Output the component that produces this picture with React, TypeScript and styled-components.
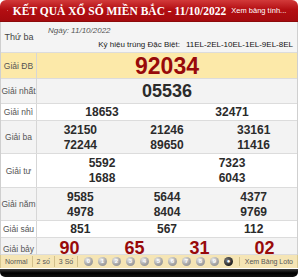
import React from "react";
import styled, { createGlobalStyle } from "styled-components";

const Global = createGlobalStyle`
  html, body {
    margin: 0;
    padding: 0;
    background: #ffffff;
  }
  body {
    font-family: "Liberation Sans", Arial, sans-serif;
  }
`;

const Frame = styled.div`
  width: 298px;
  display: flex;
  flex-direction: column;
`;

const Header = styled.div`
  height: 21px;
  display: flex;
  align-items: center;
  padding: 0 6px 0 7px;
  border-radius: 6px 6px 0 0;
  background: linear-gradient(#d23a3a 0%, #b40f13 45%, #a50a0e 100%);
  border-bottom: 1px solid #8c0a0a;
  gap: 5px;
`;

const Title = styled.div`
  flex: 1;
  color: #ffffff;
  font-family: "Liberation Serif", "Times New Roman", serif;
  font-weight: bold;
  font-size: 11.5px;
  white-space: nowrap;
`;

const MoreLink = styled.div`
  color: #ffffff;
  font-size: 7.5px;
  white-space: nowrap;
`;

const Table = styled.div`
  border-left: 1px solid #cfcfcf;
  border-right: 1px solid #cfcfcf;
  display: flex;
  flex-direction: column;
`;

const Row = styled.div<{ $bg: string; $h: number }>`
  display: grid;
  grid-template-columns: 36px 1fr;
  height: ${(p) => p.$h}px;
  background: ${(p) => p.$bg};
  border-bottom: 1px solid #dcdcdc;
  box-sizing: border-box;
`;

const Label = styled.div`
  display: flex;
  align-items: center;
  justify-content: center;
  border-right: 1px solid #d6d6d6;
  font-size: 8.5px;
  color: #555555;
  white-space: nowrap;
`;

const InfoRow = styled.div`
  display: grid;
  grid-template-columns: 36px 1fr;
  height: 31px;
  background: #f4f4f4;
  border-bottom: 1px solid #dcdcdc;
  box-sizing: border-box;
`;

const InfoLabel = styled.div`
  display: flex;
  align-items: center;
  justify-content: center;
  font-size: 9px;
  color: #444444;
`;

const InfoBody = styled.div`
  display: flex;
  flex-direction: column;
  justify-content: space-between;
  padding: 4px 4px 3px 11px;
`;

const DateLine = styled.div`
  font-style: italic;
  font-size: 8px;
  color: #555555;
`;

const CodeLine = styled.div`
  text-align: right;
  font-size: 8px;
  color: #222222;
  white-space: nowrap;
  span {
    margin-left: 6px;
    color: #111111;
  }
`;

const Values = styled.div<{ $cols: number }>`
  display: grid;
  grid-template-columns: repeat(${(p) => p.$cols}, 1fr);
  align-content: center;
  row-gap: 1px;
`;

const Num = styled.div<{ $size: number; $red?: boolean }>`
  text-align: center;
  font-weight: bold;
  font-size: ${(p) => p.$size}px;
  line-height: ${(p) => Math.round(p.$size * 1.15)}px;
  color: ${(p) => (p.$red ? "#980a0a" : "#2b2b2b")};
`;

const Footer = styled.div`
  height: 13px;
  display: flex;
  align-items: center;
  background: #f5e5b5;
  border-left: 1px solid #d8c890;
  border-right: 1px solid #d8c890;
  font-size: 7px;
  color: #555555;
`;

const Tab = styled.div`
  padding: 0 4px;
  border-right: 1px solid #d2c08a;
  line-height: 11px;
`;

const Balls = styled.div`
  flex: 1;
  display: flex;
  justify-content: center;
  gap: 5px;
  border-right: 1px solid #d2c08a;
`;

const Ball = styled.span<{ $dark?: boolean }>`
  width: 9px;
  height: 9px;
  border-radius: 50%;
  background: ${(p) =>
    p.$dark
      ? "radial-gradient(circle at 35% 35%, #777 0%, #222 70%)"
      : "radial-gradient(circle at 35% 30%, #e8e8e8 0%, #a6a6a6 55%, #8a8a8a 100%)"};
  color: #ffffff;
  font-size: 6px;
  font-weight: bold;
  line-height: 9px;
  text-align: center;
`;

const LotoLink = styled.div`
  padding: 0 4px 0 5px;
`;

const Bottom = styled.div`
  height: 8px;
  margin-top: 1px;
  border-radius: 0 0 5px 5px;
  background: linear-gradient(#3a3a3a, #000000 50%, #111111);
`;

const Chart = () => (
  <svg width="11" height="10" viewBox="0 0 11 10">
    <rect x="0" y="9" width="11" height="1" fill="#2a3b8f" />
    <rect x="1" y="5" width="2" height="4" fill="#f3c400" />
    <rect x="4" y="2" width="2" height="7" fill="#2f5fd0" />
    <rect x="7" y="0" width="2" height="9" fill="#e0262b" />
  </svg>
);

const TicketIcon = () => (
  <svg width="13" height="11" viewBox="0 0 13 11">
    <rect x="0.5" y="2.5" width="12" height="8" rx="1" fill="#f3b6b6" stroke="#ffffff" />
    <rect x="3" y="0" width="7" height="3" fill="#ffffff" />
    <rect x="2" y="5" width="9" height="1" fill="#c22" />
    <rect x="2" y="7" width="9" height="1" fill="#c22" />
  </svg>
);

type Prize = { label: string; h: number; bg: string; cols: number; size: number; red?: boolean; nums: string[] };

const prizes: Prize[] = [
  { label: "Giải ĐB", h: 26, bg: "#fce9a9", cols: 1, size: 23, red: true, nums: ["92034"] },
  { label: "Giải nhất", h: 25, bg: "#f3f3f3", cols: 1, size: 18, nums: ["05536"] },
  { label: "Giải nhì", h: 17, bg: "#ffffff", cols: 2, size: 12, nums: ["18653", "32471"] },
  { label: "Giải ba", h: 33, bg: "#f3f3f3", cols: 3, size: 12, nums: ["32150", "21246", "33161", "72244", "89650", "11416"] },
  { label: "Giải tư", h: 34, bg: "#ffffff", cols: 2, size: 12, nums: ["5592", "7323", "1688", "6043"] },
  { label: "Giải năm", h: 33, bg: "#f3f3f3", cols: 3, size: 12, nums: ["9585", "5644", "4377", "4978", "8404", "9769"] },
  { label: "Giải sáu", h: 17, bg: "#ffffff", cols: 3, size: 12, nums: ["851", "567", "112"] },
  { label: "Giải bảy", h: 17, bg: "#f3f3f3", cols: 4, size: 18, red: true, nums: ["90", "65", "31", "02"] },
];

export default function App() {
  return (
    <>
      <Global />
      <Frame>
        <Header>
          <TicketIcon />
          <Title>KẾT QUẢ XỔ SỐ MIỀN BẮC - 11/10/2022</Title>
          <MoreLink>Xem bảng tính...</MoreLink>
          <Chart />
        </Header>
        <Table>
          <InfoRow>
            <InfoLabel>Thứ ba</InfoLabel>
            <InfoBody>
              <DateLine>Ngày: 11/10/2022</DateLine>
              <CodeLine>
                Ký hiệu trúng Đặc Biệt:<span>11EL-2EL-10EL-1EL-9EL-8EL</span>
              </CodeLine>
            </InfoBody>
          </InfoRow>
          {prizes.map((p) => (
            <Row key={p.label} $bg={p.bg} $h={p.h}>
              <Label>{p.label}</Label>
              <Values $cols={p.cols}>
                {p.nums.map((n, i) => (
                  <Num key={i} $size={p.size} $red={p.red}>
                    {n}
                  </Num>
                ))}
              </Values>
            </Row>
          ))}
        </Table>
        <Footer>
          <Tab>Normal</Tab>
          <Tab>2 số</Tab>
          <Tab>3 Số</Tab>
          <Balls>
            {["0", "1", "2", "3", "4", "5", "6", "7", "8", "9"].map((d) => (
              <Ball key={d}>{d}</Ball>
            ))}
            <Ball $dark>●</Ball>
          </Balls>
          <LotoLink>Xem Bảng Loto</LotoLink>
        </Footer>
        <Bottom />
      </Frame>
    </>
  );
}
